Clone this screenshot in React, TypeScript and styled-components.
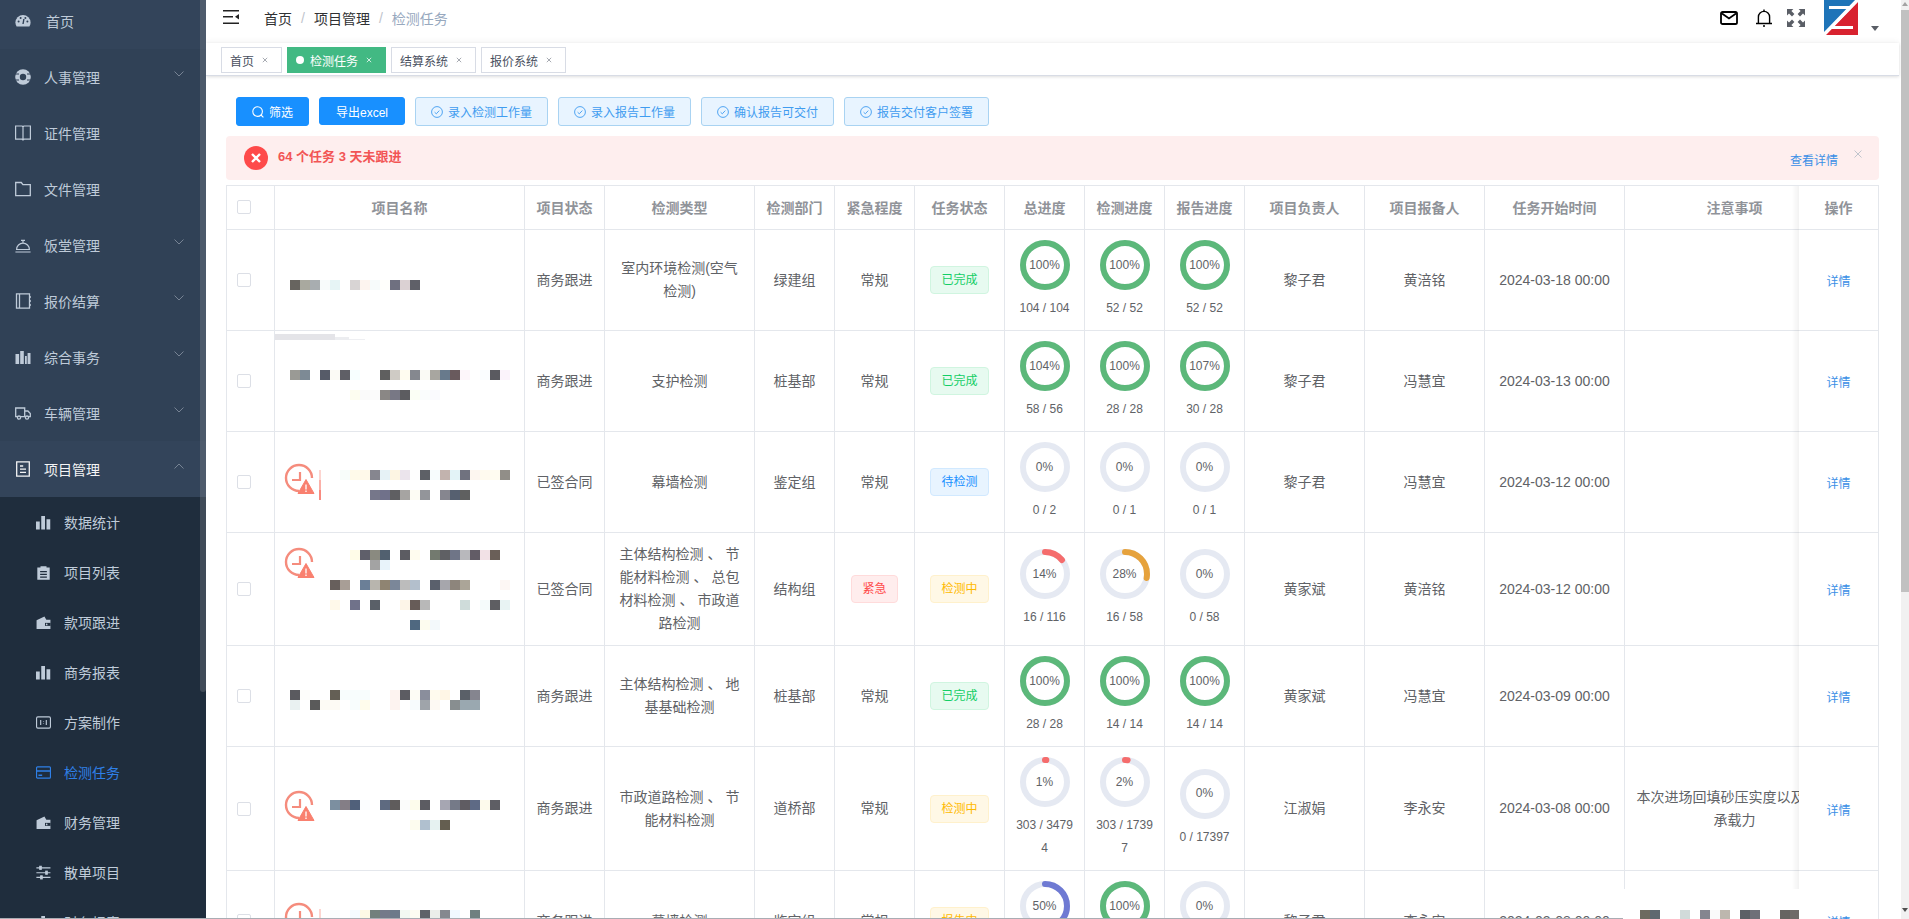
import React from "react";
import styled, { createGlobalStyle } from "styled-components";

const FONT = `"Liberation Sans", "Noto Sans CJK SC", sans-serif`;
const LINE = "#e4e7ec";

const GlobalStyle = createGlobalStyle`
	html, body {
		margin: 0;
		padding: 0;
		height: 100%;
		overflow: hidden;
		background: #fff;
		font-family: ${FONT};
	}
	* {
		box-sizing: border-box;
	}
`;

const Page = styled.div`
	position: relative;
	display: flex;
	width: 1909px;
	height: 919px;
	overflow: hidden;
`;

const BottomEdge = styled.div`
	position: absolute;
	left: 0;
	bottom: 0;
	width: 1623px;
	height: 1px;
	background: #a9adb4;
	z-index: 5;
`;

/* sidebar */

const Sidebar = styled.aside`
	position: relative;
	flex: 0 0 206px;
	background: #304156;
	overflow: hidden;
`;

const SideThumb = styled.div`
	position: absolute;
	top: 0;
	right: 0;
	width: 6px;
	height: 692px;
	border-radius: 0 0 3px 3px;
	background: rgba(144, 147, 153, 0.3);
`;

const MenuList = styled.ul`
	list-style: none;
	margin: -7px 0 0;
	padding: 0;
`;

const MenuTitle = styled.li<{ $active?: boolean; $home?: boolean }>`
	display: flex;
	align-items: center;
	gap: ${(p) => (p.$home ? "15px" : "13px")};
	height: 56px;
	padding: 0 22px 0 15px;
	font-size: 14px;
	color: ${(p) => (p.$active ? "#f4f4f5" : "#bfcbd9")};
	background: ${(p) => (p.$active || p.$home ? "#33445a" : "transparent")};
`;

const MenuLabel = styled.span`
	flex: 1;
`;

const Chevron = styled.svg`
	margin-bottom: 6px;
	color: #7f8b9b;
`;

const SubList = styled.ul`
	list-style: none;
	margin: 0;
	padding: 0 0 60px;
	background: #1f2d3d;
`;

const SubItem = styled.li<{ $active?: boolean }>`
	display: flex;
	align-items: center;
	gap: 13px;
	height: 50px;
	padding-left: 36px;
	font-size: 14px;
	color: ${(p) => (p.$active ? "#2f80e8" : "#bfcbd9")};
`;

/* main column */

const Main = styled.main`
	flex: 1;
	min-width: 0;
	display: flex;
	flex-direction: column;
`;

const Navbar = styled.header`
	flex: 0 0 43px;
	display: flex;
	align-items: flex-start;
	padding-left: 17px;
	background: #fff;
`;

const Hamburger = styled.svg`
	margin-top: 10px;
	color: #222;
`;

const Crumbs = styled.nav`
	display: flex;
	align-items: center;
	height: 35px;
	margin-left: 25px;
	font-size: 14px;
	color: #303133;
`;

const CrumbSep = styled.span`
	margin: 0 9px;
	color: #c0c4cc;
`;

const CrumbLast = styled.span`
	color: #97a8be;
`;

const NavRight = styled.div`
	margin-left: auto;
	display: flex;
	align-items: flex-start;
	padding-right: 22px;
`;

const NavIcon = styled.svg<{ $gap: number; $top: number }>`
	margin-left: ${(p) => p.$gap}px;
	margin-top: ${(p) => p.$top}px;
`;

const Caret = styled.span`
	margin: 26px 0 0 13px;
	border-left: 4px solid transparent;
	border-right: 4px solid transparent;
	border-top: 5px solid #5a5e66;
`;

const TagsBar = styled.div`
	flex: 0 0 33px;
	display: flex;
	gap: 5px;
	padding: 4px 0 0 15px;
	margin-right: 2px;
	background: #fff;
	border-bottom: 1px solid #d8dce5;
	box-shadow: 0 1px 3px 0 rgba(0, 0, 0, 0.12), 0 -2px 6px 0 rgba(0, 0, 0, 0.04);
`;

const Tag = styled.div<{ $active?: boolean }>`
	display: flex;
	align-items: center;
	height: 26px;
	padding: 0 8px;
	font-size: 12px;
	color: ${(p) => (p.$active ? "#fff" : "#495060")};
	background: ${(p) => (p.$active ? "#42b983" : "#fff")};
	border: 1px solid ${(p) => (p.$active ? "#42b983" : "#d8dce5")};
`;

const TagDot = styled.i`
	width: 8px;
	height: 8px;
	margin-right: 6px;
	border-radius: 50%;
	background: #fff;
`;

const TagClose = styled.svg`
	margin: 0 5px 0 8px;
	opacity: 0.75;
`;

const Content = styled.section`
	flex: 1;
	min-height: 0;
	padding: 21px 22px 0 20px;
`;

const Toolbar = styled.div`
	display: flex;
	align-items: flex-start;
	gap: 10px;
	margin-left: 10px;
`;

const Button = styled.button<{ $light?: boolean; $h?: number; $pad?: number }>`
	display: flex;
	align-items: center;
	gap: 5px;
	height: ${(p) => p.$h ?? 29}px;
	padding: 0 ${(p) => p.$pad ?? 15}px;
	font-family: ${FONT};
	font-size: 12px;
	border-radius: 3px;
	color: ${(p) => (p.$light ? "#3f9cf0" : "#fff")};
	background: ${(p) => (p.$light ? "#e8f4ff" : "#1890ff")};
	border: 1px solid ${(p) => (p.$light ? "#a9d3f2" : "#1890ff")};
`;

const Alert = styled.div`
	display: flex;
	align-items: center;
	height: 44px;
	margin-top: 10px;
	padding: 0 17px 0 18px;
	border-radius: 4px;
	background: #feeeee;
`;

const AlertTitle = styled.span`
	margin: 0 0 5px 10px;
	font-size: 13px;
	font-weight: 700;
	color: #f25555;
`;

const AlertLink = styled.a`
	margin: 2px 0 0 auto;
	font-size: 12px;
	color: #3b8fe6;
`;

const AlertClose = styled.svg`
	margin: 0 0 9px 16px;
`;

/* table */

const TableBox = styled.div`
	margin-top: 5px;
	overflow: hidden;
	border-left: 1px solid ${LINE};
	border-top: 1px solid ${LINE};
`;

const Table = styled.table`
	width: 1698px;
	table-layout: fixed;
	border-collapse: separate;
	border-spacing: 0;
	font-size: 14px;
	color: #606266;
`;

const HeadCell = styled.th`
	height: 44px;
	padding: 0 0 2px;
	font-weight: 700;
	color: #909399;
	text-align: center;
	background: #fff;
	border-right: 1px solid ${LINE};
	border-bottom: 1px solid ${LINE};
`;

const Cell = styled.td`
	position: relative;
	padding: 10px;
	line-height: 23px;
	text-align: center;
	vertical-align: middle;
	border-right: 1px solid ${LINE};
	border-bottom: 1px solid ${LINE};
	word-break: break-all;
`;

const BlurCell = styled(Cell)`
	padding: 0;
	line-height: 0;
`;

const CheckCell = styled(Cell)`
	padding: 0;
`;

const edgeShade = `
	position: sticky;
	right: 0;
	z-index: 2;
	background: #fff;
	&::before {
		content: "";
		position: absolute;
		left: -7px;
		top: 0;
		bottom: -1px;
		width: 7px;
		background: linear-gradient(to left, rgba(0, 0, 0, 0.05), rgba(0, 0, 0, 0));
	}
`;

const StickyHead = styled(HeadCell)`
	${edgeShade}
`;

const StickyCell = styled(Cell)`
	${edgeShade}
`;

const CheckBox = styled.i`
	display: block;
	width: 14px;
	height: 14px;
	margin-left: 10px;
	border: 1px solid #dcdfe6;
	border-radius: 2px;
	background: #fff;
`;

const TONES = {
	success: { bg: "#e7faf0", line: "#d0f5e0", text: "#13ce66" },
	info: { bg: "#e8f4ff", line: "#d1e9ff", text: "#1890ff" },
	warn: { bg: "#fff8e6", line: "#fff1cc", text: "#ffba00" },
	danger: { bg: "#ffeded", line: "#ffdbdb", text: "#ff4949" },
};
type Tone = keyof typeof TONES;

const StatusTag = styled.span<{ $tone: Tone }>`
	display: inline-block;
	height: 28px;
	padding: 0 10px;
	font-size: 12px;
	line-height: 26px;
	border-radius: 4px;
	color: ${(p) => TONES[p.$tone].text};
	background: ${(p) => TONES[p.$tone].bg};
	border: 1px solid ${(p) => TONES[p.$tone].line};
`;

const DetailLink = styled.a`
	position: relative;
	top: 2px;
	font-size: 12px;
	color: #3b8fe6;
`;

const RingBox = styled.div`
	display: grid;
	place-items: center;
	width: 50px;
	height: 50px;
	margin: 0 auto 7px;
	font-size: 12px;
	& > * {
		grid-area: 1 / 1;
	}
`;

const RingCount = styled.div`
	font-size: 12px;
`;

const NoteBlur = styled.div`
	position: absolute;
	z-index: 3;
	left: -1px;
	top: 18px;
	width: 175px;
	height: 90px;
	background: #fff;
	overflow: hidden;
	line-height: 0;
`;

/* page scrollbar */

const PageScroll = styled.div`
	position: relative;
	flex: 0 0 8px;
	background: #f1f1f1;
`;

const ScrollThumb = styled.div`
	position: absolute;
	top: 10px;
	left: 0;
	right: 0;
	height: 582px;
	background: #c1c1c1;
`;

const ScrollArrow = styled.i<{ $down?: boolean }>`
	position: absolute;
	left: 1px;
	${(p) => (p.$down ? "bottom: 7px;" : "top: 2px;")}
	border-left: 3px solid transparent;
	border-right: 3px solid transparent;
	${(p) => (p.$down ? "border-top: 4px solid #505050;" : "border-bottom: 4px solid #a3a3a3;")}
`;

/* icons */

type IconName =
	| "home" | "people" | "book" | "folder" | "dome" | "ledger" | "columns" | "truck" | "doc"
	| "bars" | "clip" | "wallet" | "ratio" | "card" | "sliders";

function MenuIcon({ name, size = 16 }: { name: IconName; size?: number }) {
	const bg = size === 16 ? "#304156" : "#1f2d3d";
	const common = { width: size, height: size, viewBox: "0 0 16 16", style: { flex: "none" } };
	switch (name) {
		case "home":
			return (
				<svg {...common}>
					<path fill="currentColor" d="M8 2a7.6 7.6 0 0 0-7.6 7.6c0 1.5.4 2.8 1.2 3.9h12.8c.8-1.1 1.2-2.4 1.2-3.9A7.6 7.6 0 0 0 8 2z" />
					<circle cx="3.6" cy="8.6" r="1" fill={bg} />
					<circle cx="5.6" cy="5" r="1" fill={bg} />
					<circle cx="10.4" cy="5" r="1" fill={bg} />
					<circle cx="12.4" cy="8.6" r="1" fill={bg} />
					<path stroke={bg} strokeWidth="1.4" d="M8 11l.9-5" />
				</svg>
			);
		case "people":
			return (
				<svg {...common}>
					<circle cx="8" cy="8" r="7.8" fill="currentColor" />
					<circle cx="8" cy="8" r="3.2" fill={bg} />
					<path stroke={bg} strokeWidth="1" d="M0 5h4M12 5h4M0 11h4M12 11h4" />
				</svg>
			);
		case "book":
			return (
				<svg {...common} fill="none" stroke="currentColor" strokeWidth="1.2">
					<path d="M.6 1h6.6L8 1.8 8.8 1h6.6v13.2H9L8 15l-1-.8H.6zM8 1.8V15" />
				</svg>
			);
		case "folder":
			return (
				<svg {...common} fill="none" stroke="currentColor" strokeWidth="1.3">
					<path d="M.7 1.5h5.6l1.6 2.2h7.4v11H.7z" />
				</svg>
			);
		case "dome":
			return (
				<svg {...common} fill="none" stroke="currentColor" strokeWidth="1.2">
					<path d="M1.6 12.5a6.4 6.4 0 0 1 12.8 0zM.4 15h15.2M6 3.4h4M8 3.4v2.6" />
				</svg>
			);
		case "ledger":
			return (
				<svg {...common} fill="none" stroke="currentColor" strokeWidth="1.3">
					<path d="M1.500.8h13v14.400h-13zM4.500.8v14.400M14.500 4H16M14.500 8H16M14.500 12H16" />
				</svg>
			);
		case "columns":
			return (
				<svg {...common} fill="currentColor">
					<path d="M.5 5h3.600v10H.5zM5.200 2h3.600v13H5.200zM10 7h1.800v8H10zM12.600 4h2.900v11h-2.900z" />
				</svg>
			);
		case "truck":
			return (
				<svg {...common} fill="none" stroke="currentColor" strokeWidth="1.3">
					<path d="M.7 3h9v8.600H.7zM9.700 6h3.200l2.400 2.600v3h-5.600" />
					<circle cx="4" cy="12.6" r="1.6" fill={bg} />
					<circle cx="12" cy="12.6" r="1.6" fill={bg} />
				</svg>
			);
		case "doc":
			return (
				<svg {...common} fill="none" stroke="currentColor" strokeWidth="1.3">
					<path d="M1.700.8h12.600v14.400H1.700zM5 5h3.200M5 8.200h6M5 11.400h6" />
				</svg>
			);
		case "bars":
			return (
				<svg {...common} fill="currentColor">
					<path d="M0 7h4v8.500H0zM5.600 1h4v14.500h-4zM11.200 4.400h4v11.100h-4z" />
				</svg>
			);
		case "clip":
			return (
				<svg {...common}>
					<path fill="currentColor" d="M1.400 2.600h3.400V1.200h6.400v1.400h3.400v13.200H1.400z" />
					<path stroke={bg} strokeWidth="1.3" d="M4.400 7h7.200M4.400 10h7.200M4.400 13h7.200" />
				</svg>
			);
		case "wallet":
			return (
				<svg {...common}>
					<path fill="currentColor" d="M.6 5.600l8.400-4 2 3.400h4.400v10H.6z" />
					<path fill={bg} d="M9.600 8.400h6v3.200h-6z" />
					<circle cx="11.4" cy="10" r=".9" fill="currentColor" />
				</svg>
			);
		case "ratio":
			return (
				<svg {...common} fill="none" stroke="currentColor" strokeWidth="1.2">
					<rect x=".6" y="2" width="14.8" height="12" rx="1.4" />
					<path d="M5 5.400v5.200M11 5.400v5.200M8 6.400v.6M8 9v.6" />
				</svg>
			);
		case "card":
			return (
				<svg {...common} fill="none" stroke="currentColor" strokeWidth="1.2">
					<rect x=".6" y="2" width="14.8" height="12" rx="1" />
					<path strokeWidth="1.6" d="M.6 6.400h14.800M2.600 11h4" />
				</svg>
			);
		case "sliders":
			return (
				<svg {...common} stroke="currentColor" strokeWidth="1.2" fill="currentColor">
					<path d="M.4 3h15M.4 8.200h15M.4 13.200h15" />
					<rect x="4" y="1.4" width="1.6" height="3.2" />
					<rect x="10.4" y="6.6" width="1.6" height="3.2" />
					<rect x="5" y="11.6" width="1.6" height="3.2" />
				</svg>
			);
	}
}

const ChevronIcon = ({ up }: { up?: boolean }) => (
	<Chevron width="10" height="6" viewBox="0 0 10 6" fill="none" stroke="currentColor" strokeWidth="0.9">
		<path d={up ? "M.5 5.500L5 1l4.500 4.500" : "M.5.5L5 5 9.500.5"} />
	</Chevron>
);

const CloseIcon = ({ color }: { color: string }) => (
	<TagClose width="6" height="6" viewBox="0 0 6 6" stroke={color} strokeWidth="1">
		<path d="M.8.8l4.400 4.400M5.200.8L.8 5.200" />
	</TagClose>
);

const CheckCircle = () => (
	<svg width="12" height="12" viewBox="0 0 12 12" fill="none" stroke="currentColor" strokeWidth="0.9">
		<circle cx="6" cy="6" r="5.4" />
		<path d="M3.600 6.200l1.700 1.600 3-3.200" />
	</svg>
);

/* blurred bits of the project names */

type BlurLine = { x: number; y: number; c: string };

const Blur = ({ lines, width, height, children }: { lines: BlurLine[]; width: number; height: number; children?: React.ReactNode }) => (
	<svg width={width} height={height} style={{ display: "block" }} shapeRendering="crispEdges">
		{lines.map((line) =>
			line.c.split(" ").map((fill, i) =>
				fill === "-" ? null : <rect key={`${line.y}-${i}`} x={line.x + i * 10} y={line.y} width="10" height="10" fill={fill} />,
			),
		)}
		{children}
	</svg>
);

const Alarm = ({ x, y }: { x: number; y: number }) => (
	<g transform={`translate(${x} ${y})`} shapeRendering="auto">
		<path d="M14 27A13 13 0 1 1 27 14" fill="none" stroke="#f58c7d" strokeWidth="2.4" />
		<path d="M15 8v8H7" fill="none" stroke="#f58c7d" strokeWidth="2.2" />
		<path d="M21 15.500l8 14H13z" fill="#f9806f" stroke="#f9806f" strokeLinejoin="round" />
		<path d="M21 20.500v5M21 26.600v1.400" stroke="#fff" strokeWidth="1.3" />
	</g>
);

const Strip = ({ y }: { y: number }) => (
	<>
		<rect x="44" y={y} width="2" height="10" fill="#fdd5d0" />
		<rect x="44" y={y + 10} width="2" height="10" fill="#fbb0a8" />
		<rect x="44" y={y + 20} width="2" height="10" fill="#f98a7f" />
	</>
);

/* progress ring */

const RING_GREEN = "#5cb87a";

function Ring({ percent, color, count }: { percent: number; color?: string; count: string }) {
	const stroke = color ?? (percent >= 100 ? RING_GREEN : "#e5e9f2");
	return (
		<>
			<RingBox>
				<svg width="50" height="50" viewBox="0 0 50 50">
					<circle cx="25" cy="25" r="22" fill="none" stroke="#e5e9f2" strokeWidth="6" />
					{percent > 0 && (
						<circle
							cx="25"
							cy="25"
							r="22"
							fill="none"
							stroke={stroke}
							strokeWidth="6"
							strokeLinecap="round"
							pathLength={100}
							strokeDasharray={`${Math.min(percent, 100)} 100`}
							transform="rotate(-90 25 25)"
						/>
					)}
				</svg>
				<span>{percent}%</span>
			</RingBox>
			<RingCount>{count}</RingCount>
		</>
	);
}

/* data */

const TOP_MENU: { name: IconName; label: string; arrow: boolean }[] = [
	{ name: "home", label: "首页", arrow: false },
	{ name: "people", label: "人事管理", arrow: true },
	{ name: "book", label: "证件管理", arrow: false },
	{ name: "folder", label: "文件管理", arrow: false },
	{ name: "dome", label: "饭堂管理", arrow: true },
	{ name: "ledger", label: "报价结算", arrow: true },
	{ name: "columns", label: "综合事务", arrow: true },
	{ name: "truck", label: "车辆管理", arrow: true },
];

const SUB_MENU: { name: IconName; label: string }[] = [
	{ name: "bars", label: "数据统计" },
	{ name: "clip", label: "项目列表" },
	{ name: "wallet", label: "款项跟进" },
	{ name: "bars", label: "商务报表" },
	{ name: "ratio", label: "方案制作" },
	{ name: "card", label: "检测任务" },
	{ name: "wallet", label: "财务管理" },
	{ name: "sliders", label: "散单项目" },
	{ name: "bars", label: "财务报表" },
];

const COLUMNS = [
	["项目名称", 250], ["项目状态", 80], ["检测类型", 150], ["检测部门", 80], ["紧急程度", 80],
	["任务状态", 90], ["总进度", 80], ["检测进度", 80], ["报告进度", 80], ["项目负责人", 120],
	["项目报备人", 120], ["任务开始时间", 140], ["注意事项", 220],
] as const;

const GREEN = RING_GREEN;
const RED = "#f56c6c";
const ORANGE = "#e6a23c";
const PURPLE = "#6f7ad3";

type Progress = { percent: number; color?: string; count: string };
type Row = {
	height: number;
	blur: BlurLine[];
	alarm?: number;
	strip?: number;
	smudge?: boolean;
	state: string;
	kind: string;
	dept: string;
	urgent?: boolean;
	status: [string, Tone];
	rings: Progress[];
	owner: string;
	reporter: string;
	date: string;
	note?: string;
	noteBlur?: boolean;
};

const ROWS: Row[] = [
	{
		height: 100,
		blur: [{ x: 15, y: 50, c: "#67645f #a9a99f #a8adb0 #f8fbfb #e6f4f5 - #d8d4d4 #fdf4ef #f7fbfb #fffffb #6f7080 #dbd1d3 #5f6068" }],
		state: "商务跟进",
		kind: "室内环境检测(空气检测)",
		dept: "绿建组",
		status: ["已完成", "success"],
		rings: [
			{ percent: 100, count: "104 / 104" },
			{ percent: 100, count: "52 / 52" },
			{ percent: 100, count: "52 / 52" },
		],
		owner: "黎子君",
		reporter: "黄涪铭",
		date: "2024-03-18 00:00",
	},
	{
		height: 100,
		smudge: true,
		blur: [
			{ x: 15, y: 39, c: "#9a9a95 #7d8a95 - #565b68 #fbfaf5 #5f5f66 #f7ffff - - #5f5f5f #cfcbc5 #fffcf0 #85888f #fafaf5 #a8a6a0 #687a8c #695a5d #fdf6fa - #fafdff #5a5a60 #fbf3fb" },
			{ x: 75, y: 59, c: "#fdfdf0 #fafafa #fbfbfb #8a8785 #787885 #5c5c60 #fbfff5 #fafdfd #fafafe" },
		],
		state: "商务跟进",
		kind: "支护检测",
		dept: "桩基部",
		status: ["已完成", "success"],
		rings: [
			{ percent: 104, count: "58 / 56" },
			{ percent: 100, count: "28 / 28" },
			{ percent: 107, count: "30 / 28" },
		],
		owner: "黎子君",
		reporter: "冯慧宜",
		date: "2024-03-13 00:00",
	},
	{
		height: 100,
		alarm: 32,
		strip: 38,
		blur: [
			{ x: 65, y: 38, c: "#f8fdfa #fffaea #fff9ea #86868f #e6f2f6 #fdf5e3 #ebe4ec #fefefe #5d6066 #f7fcfd #c2b3ae #e3f3f7 #70727f #fdf6f0 #fffaef #fffcf1 #918e88" },
			{ x: 95, y: 58, c: "#76778a #70718a #5f5f62 #a6a4a2 #fdfcf4 #93959a - #86868f #566070 #5f6060" },
		],
		state: "已签合同",
		kind: "幕墙检测",
		dept: "鉴定组",
		status: ["待检测", "info"],
		rings: [
			{ percent: 0, count: "0 / 2" },
			{ percent: 0, count: "0 / 1" },
			{ percent: 0, count: "0 / 1" },
		],
		owner: "黎子君",
		reporter: "冯慧宜",
		date: "2024-03-12 00:00",
	},
	{
		height: 112,
		alarm: 15,
		blur: [
			{ x: 75, y: 17, c: "#fffce8 #5f5f6a #8a8a80 #51606f - #5c5c62 #fffcef - #737a6f #5f6064 #6f7587 #b8b8bc #625c66 #f2e1e6 #6a5f58" },
			{ x: 95, y: 27, c: "#a3a3a3 #e8f3fa" },
			{ x: 55, y: 47, c: "#675f5c #a89e96 - #6b7f97 #b8b5ae #8f8472 #7b8799 #bcbcbc #b3bfcc - #5a606c #a6a6ac #8d857c #aba598 - - - #fdf7f4" },
			{ x: 55, y: 67, c: "#fff9ea - #70728a - #5a6068 - - #fdf5e8 #675c58 #b8b8b8 - - - #cfdcda - #f5fbfb #5e5e62 #e8f3f3" },
			{ x: 135, y: 87, c: "#4f6880 #fdfcef #f3f9fb" },
		],
		state: "已签合同",
		kind: "主体结构检测 、 节能材料检测 、 总包材料检测 、 市政道路检测",
		dept: "结构组",
		urgent: true,
		status: ["检测中", "warn"],
		rings: [
			{ percent: 14, color: RED, count: "16 / 116" },
			{ percent: 28, color: ORANGE, count: "16 / 58" },
			{ percent: 0, count: "0 / 58" },
		],
		owner: "黄家斌",
		reporter: "黄涪铭",
		date: "2024-03-12 00:00",
	},
	{
		height: 100,
		blur: [
			{ x: 15, y: 44, c: "#5a5a5f #fdfdfa - - #645f55 #f8fdfd #f8fdfd #f8fdfd - - #fdf3f0 #5c5c62 #fdfcf5 #8a8e9c #fffbee #fff6e6 - #5a6068 #85858f" },
			{ x: 15, y: 54, c: "#e9f1f1 - #5a5a5a #fdfbf5 #fdfaf4 - #f8fdfd #fffcec - - #fdf3f0 - #f7fbfd #9fa4aa #fdf9f3 - #888e90 #9aa8b0 #9aa8b0" },
		],
		state: "商务跟进",
		kind: "主体结构检测 、 地基基础检测",
		dept: "桩基部",
		status: ["已完成", "success"],
		rings: [
			{ percent: 100, count: "28 / 28" },
			{ percent: 100, count: "14 / 14" },
			{ percent: 100, count: "14 / 14" },
		],
		owner: "黄家斌",
		reporter: "冯慧宜",
		date: "2024-03-09 00:00",
	},
	{
		height: 123,
		alarm: 44,
		blur: [
			{ x: 55, y: 53, c: "#7c8fa0 #847e86 #50607a #fbfdff - #5e6a80 #5f5c5c #fbfcfb #fdfcec #5c5c62 - #a6a6b2 #757a88 #5f5c62 #5e6a85 #fdfaec #5e5e64" },
			{ x: 135, y: 73, c: "#fdfcef #b0c0cf #e6f2f1 #645e50" },
		],
		state: "商务跟进",
		kind: "市政道路检测 、 节能材料检测",
		dept: "道桥部",
		status: ["检测中", "warn"],
		rings: [
			{ percent: 1, color: RED, count: "303 / 34794" },
			{ percent: 2, color: RED, count: "303 / 17397" },
			{ percent: 0, count: "0 / 17397" },
		],
		owner: "江淑娟",
		reporter: "李永安",
		date: "2024-03-08 00:00",
		note: "本次进场回填砂压实度以及地基承载力",
	},
	{
		height: 100,
		alarm: 32,
		strip: 38,
		blur: [{ x: 55, y: 39, c: "#fafdfd - #f5fbff #fdf9e6 #72807c #757a8a #6c7a8a #f2f8f2 #fdfcf2 #5e6269 #ebeeea #85888f #f0f8ff - #6f8080" }],
		state: "商务跟进",
		kind: "幕墙检测",
		dept: "鉴定组",
		status: ["报告中", "warn"],
		rings: [
			{ percent: 50, color: PURPLE, count: "1 / 2" },
			{ percent: 100, color: GREEN, count: "1 / 1" },
			{ percent: 0, count: "0 / 1" },
		],
		owner: "黎子君",
		reporter: "李永安",
		date: "2024-03-08 00:00",
		noteBlur: true,
	},
];

const BUTTONS = ["录入检测工作量", "录入报告工作量", "确认报告可交付", "报告交付客户签署"];

function App() {
	return (
		<Page>
			<GlobalStyle />
			<Sidebar>
				<MenuList>
					{TOP_MENU.map((item, i) => (
						<MenuTitle key={item.label} $home={i === 0}>
							<MenuIcon name={item.name} />
							<MenuLabel>{item.label}</MenuLabel>
							{item.arrow && <ChevronIcon />}
						</MenuTitle>
					))}
					<MenuTitle $active>
						<MenuIcon name="doc" />
						<MenuLabel>项目管理</MenuLabel>
						<ChevronIcon up />
					</MenuTitle>
				</MenuList>
				<SubList>
					{SUB_MENU.map((item) => (
						<SubItem key={item.label} $active={item.label === "检测任务"}>
							<MenuIcon name={item.name} size={15} />
							<span>{item.label}</span>
						</SubItem>
					))}
				</SubList>
				<SideThumb />
			</Sidebar>

			<Main>
				<Navbar>
					<Hamburger width="16" height="14" viewBox="0 0 16 14" fill="currentColor">
						<path d="M0 0h16v1.600H0zM0 6h10v1.600H0zM0 12.400h16V14H0zM16 4l-4 2.800 4 2.800z" />
					</Hamburger>
					<Crumbs>
						<span>首页</span>
						<CrumbSep>/</CrumbSep>
						<span>项目管理</span>
						<CrumbSep>/</CrumbSep>
						<CrumbLast>检测任务</CrumbLast>
					</Crumbs>
					<NavRight>
						<NavIcon $gap={0} $top={11} width="18" height="14" viewBox="0 0 18 14" fill="none" stroke="#000" strokeWidth="1.8">
							<rect x="1" y="1" width="16" height="12" rx="1.6" />
							<path d="M2 2.500l7 5 7-5" />
						</NavIcon>
						<NavIcon $gap={17} $top={9} width="18" height="18" viewBox="0 0 18 18" fill="none" stroke="#000" strokeWidth="1.4">
							<path d="M1 14.500h16M3.400 14.500V8a5.600 5.600 0 0 1 11.200 0v6.500" />
							<path d="M9 .6v1.800M8 17h2" />
						</NavIcon>
						<NavIcon $gap={14} $top={9} width="18" height="18" viewBox="0 0 18 18" fill="#5a5e66">
							<path d="M0 0h6.400L4.400 2l3 3L5 7.400l-3-3-2 2zM18 0v6.400l-2-2-3 3L10.600 5l3-3-2-2zM0 18v-6.400l2 2 3-3L7.400 13l-3 3 2 2zM18 18h-6.400l2-2-3-3 2.400-2.400 3 3 2-2z" />
						</NavIcon>
						<NavIcon $gap={19} $top={0} width="34" height="35" viewBox="0 0 34 35">
							<path d="M0 0h32L0 33z" fill="#1e74b8" />
							<path d="M34 1.500V35H1.500z" fill="#d8222f" />
							<path d="M5 6h22v3H5zM8 26h21v3H8z" fill="#fff" />
							<path d="M33 0.500L0.500 34" stroke="#fff" strokeWidth="3.500" />
						</NavIcon>
						<Caret />
					</NavRight>
				</Navbar>

				<TagsBar>
					<Tag>首页<CloseIcon color="#8a8f99" /></Tag>
					<Tag $active><TagDot />检测任务<CloseIcon color="#fff" /></Tag>
					<Tag>结算系统<CloseIcon color="#8a8f99" /></Tag>
					<Tag>报价系统<CloseIcon color="#8a8f99" /></Tag>
				</TagsBar>

				<Content>
					<Toolbar>
						<Button>
							<svg width="12" height="12" viewBox="0 0 12 12" fill="none" stroke="#fff" strokeWidth="1.1">
								<circle cx="5.6" cy="5.6" r="4.8" />
								<path d="M9 9l2.400 2.400" />
							</svg>
							筛选
						</Button>
						<Button $h={28} $pad={16}>导出excel</Button>
						{BUTTONS.map((label) => (
							<Button key={label} $light>
								<CheckCircle />
								{label}
							</Button>
						))}
					</Toolbar>

					<Alert>
						<svg width="24" height="24" viewBox="0 0 24 24">
							<circle cx="12" cy="12" r="12" fill="#fe4a4a" />
							<path d="M8 8l8 8M16 8l-8 8" stroke="#fff" strokeWidth="2.400" />
						</svg>
						<AlertTitle>64 个任务 3 天未跟进</AlertTitle>
						<AlertLink>查看详情</AlertLink>
						<AlertClose width="8" height="8" viewBox="0 0 8 8" stroke="#c0c4cc" strokeWidth="1">
							<path d="M.5.5l7 7M7.500.5l-7 7" />
						</AlertClose>
					</Alert>

					<TableBox>
						<Table>
							<colgroup>
								<col width={48} />
								{COLUMNS.map(([label, width]) => (
									<col key={label} width={width} />
								))}
								<col width={80} />
							</colgroup>
							<thead>
								<tr>
									<HeadCell><CheckBox /></HeadCell>
									{COLUMNS.map(([label]) => (
										<HeadCell key={label}>{label}</HeadCell>
									))}
									<StickyHead>操作</StickyHead>
								</tr>
							</thead>
							<tbody>
								{ROWS.map((row, r) => (
									<tr key={r}>
										<CheckCell><CheckBox /></CheckCell>
										<BlurCell>
											<Blur lines={row.blur} width={249} height={row.height}>
												{row.smudge && (
													<>
														<rect x="0" y="3" width="60" height="6" fill="#e4e4e8" />
														<rect x="60" y="6" width="14" height="3" fill="#ecedf0" />
														<rect x="74" y="8" width="16" height="1" fill="#eeeff2" />
													</>
												)}
												{row.alarm !== undefined && <Alarm x={10} y={row.alarm} />}
												{row.strip !== undefined && <Strip y={row.strip} />}
											</Blur>
										</BlurCell>
										<Cell>{row.state}</Cell>
										<Cell>{row.kind}</Cell>
										<Cell>{row.dept}</Cell>
										<Cell>{row.urgent ? <StatusTag $tone="danger">紧急</StatusTag> : "常规"}</Cell>
										<Cell><StatusTag $tone={row.status[1]}>{row.status[0]}</StatusTag></Cell>
										{row.rings.map((ring, i) => (
											<Cell key={i}>
												<Ring {...ring} />
											</Cell>
										))}
										<Cell>{row.owner}</Cell>
										<Cell>{row.reporter}</Cell>
										<Cell>{row.date}</Cell>
										<Cell>
											{row.note}
											{row.noteBlur && (
												<NoteBlur>
													<Blur
														width={175}
														height={90}
														lines={[{ x: 16, y: 21, c: "#6d6a5f #5f6870 - - #d1dbda - #84858f #fafafa #bdb7ae - #5c6066 #6f7078 - - #666461 #706a68" }]}
													/>
												</NoteBlur>
											)}
										</Cell>
										<StickyCell><DetailLink>详情</DetailLink></StickyCell>
									</tr>
								))}
							</tbody>
						</Table>
					</TableBox>
				</Content>
			</Main>

			<PageScroll>
				<ScrollArrow />
				<ScrollThumb />
				<ScrollArrow $down />
			</PageScroll>
			<BottomEdge />
		</Page>
	);
}

export default App;
